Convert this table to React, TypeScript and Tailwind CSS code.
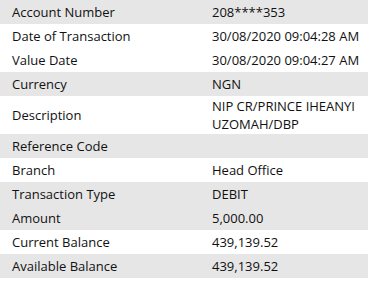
const rows: { label: string; value: string[]; shade: boolean }[] = [
  { label: "Account Number", value: ["208****353"], shade: true },
  { label: "Date of Transaction", value: ["30/08/2020 09:04:28 AM"], shade: false },
  { label: "Value Date", value: ["30/08/2020 09:04:27 AM"], shade: false },
  { label: "Currency", value: ["NGN"], shade: true },
  { label: "Description", value: ["NIP CR/PRINCE IHEANYI", "UZOMAH/DBP"], shade: false },
  { label: "Reference Code", value: [], shade: true },
  { label: "Branch", value: ["Head Office"], shade: false },
  { label: "Transaction Type", value: ["DEBIT"], shade: true },
  { label: "Amount", value: ["5,000.00"], shade: true },
  { label: "Current Balance", value: ["439,139.52"], shade: false },
  { label: "Available Balance", value: ["439,139.52"], shade: true },
];

export default function App() {
  return (
    <div className="h-[307px] w-[368px] bg-white font-['Open_Sans',sans-serif] text-[13px] leading-[18px] text-[#111]">
      {rows.map((r) => (
        <div
          key={r.label}
          className={`grid grid-cols-[212px_1fr] items-center ${
            r.value.length > 1 ? "min-h-[38px] py-px" : "h-6"
          } ${r.shade ? "bg-[#e6e6e6]" : "bg-white"}`}
        >
          <div className="pl-3">{r.label}</div>
          <div>
            {r.value.map((v) => (
              <div key={v}>{v}</div>
            ))}
          </div>
        </div>
      ))}
    </div>
  );
}
